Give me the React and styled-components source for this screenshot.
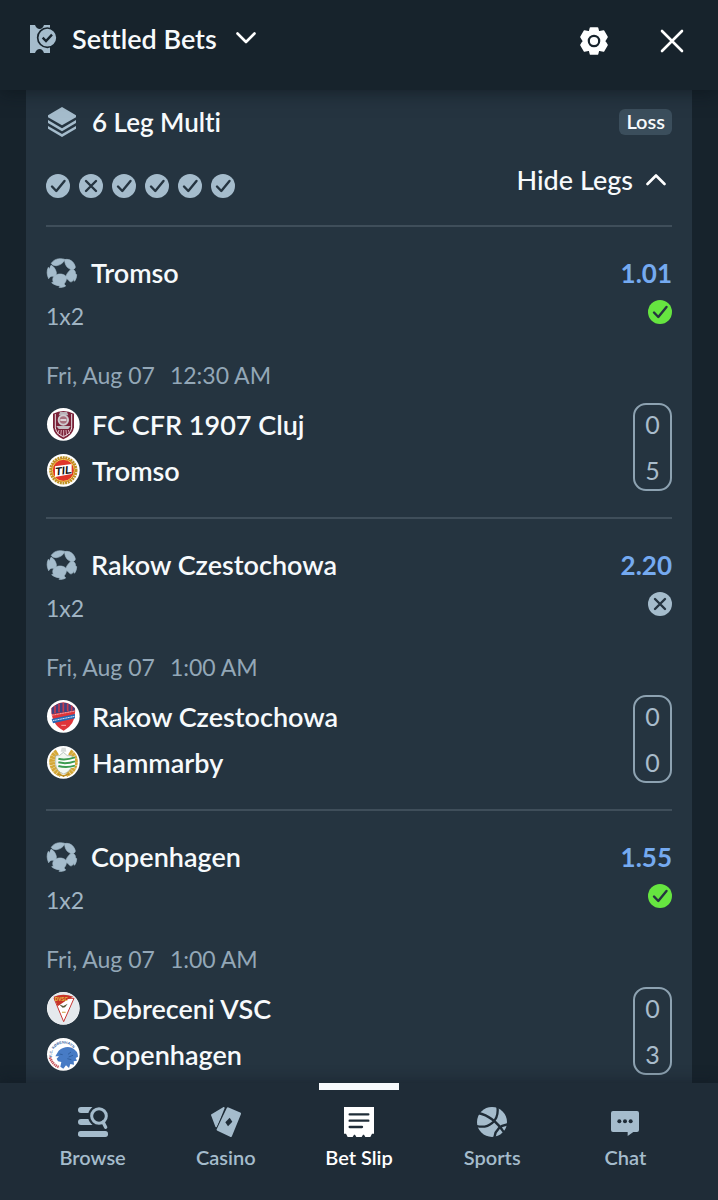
import React, { useState } from 'react';
import styled, { createGlobalStyle } from 'styled-components';

const LEGS = [
  {
    id: 1,
    pick: 'Tromso',
    market: '1x2',
    odds: '1.01',
    won: true,
    date: 'Fri, Aug 07',
    time: '12:30 AM',
    teams: [
      { name: 'FC CFR 1907 Cluj', crest: 'cluj', score: 0 },
      { name: 'Tromso', crest: 'tromso', score: 5 },
    ],
  },
  {
    id: 2,
    pick: 'Rakow Czestochowa',
    market: '1x2',
    odds: '2.20',
    won: false,
    date: 'Fri, Aug 07',
    time: '1:00 AM',
    teams: [
      { name: 'Rakow Czestochowa', crest: 'rakow', score: 0 },
      { name: 'Hammarby', crest: 'hammarby', score: 0 },
    ],
  },
  {
    id: 3,
    pick: 'Copenhagen',
    market: '1x2',
    odds: '1.55',
    won: true,
    date: 'Fri, Aug 07',
    time: '1:00 AM',
    teams: [
      { name: 'Debreceni VSC', crest: 'debrecen', score: 0 },
      { name: 'Copenhagen', crest: 'copenhagen', score: 3 },
    ],
  },
];

const RESULTS = [true, false, true, true, true, true];

const NAV = [
  { label: 'Browse', icon: BrowseIcon },
  { label: 'Casino', icon: CasinoIcon },
  { label: 'Bet Slip', icon: SlipIcon },
  { label: 'Sports', icon: SportsIcon },
  { label: 'Chat', icon: ChatIcon },
];

export default function App() {
  const [open, setOpen] = useState(true);
  const [tab, setTab] = useState('Bet Slip');

  return (
    <Page>
      <GlobalStyle />
      <Header>
        <TitleButton type="button">
          <TicketIcon />
          <Title>Settled Bets</Title>
          <Chevron />
        </TitleButton>
        <HeaderActions>
          <IconButton type="button" aria-label="Settings"><GearIcon /></IconButton>
          <IconButton type="button" aria-label="Close"><CloseIcon /></IconButton>
        </HeaderActions>
      </Header>

      <Body>
        <BetCard>
          <BetHeader>
            <LayersIcon />
            <BetName>6 Leg Multi</BetName>
            <Badge>Loss</Badge>
          </BetHeader>
          <Summary>
            <Results>
              {RESULTS.map((won, i) => (
                <ResultIcon key={i} won={won} />
              ))}
            </Results>
            <ToggleButton type="button" aria-expanded={open} onClick={() => setOpen(!open)}>
              {open ? 'Hide Legs' : 'Show Legs'}
              <Chevron up={open} />
            </ToggleButton>
          </Summary>
          {open && LEGS.map((leg) => <LegItem key={leg.id} leg={leg} />)}
        </BetCard>
      </Body>

      <NavBar>
        {NAV.map(({ label, icon: Icon }) => (
          <NavButton
            key={label}
            type="button"
            $active={tab === label}
            onClick={() => setTab(label)}
          >
            <Icon />
            {label}
          </NavButton>
        ))}
      </NavBar>
    </Page>
  );
}

function LegItem({ leg }) {
  return (
    <Leg>
      <LegTop>
        <div>
          <LegName>
            <BallIcon />
            {leg.pick}
          </LegName>
          <Market>{leg.market}</Market>
        </div>
        <LegOutcome>
          <Odds>{leg.odds}</Odds>
          <ResultIcon won={leg.won} green={leg.won} />
        </LegOutcome>
      </LegTop>
      <Kickoff>
        <span>{leg.date}</span>
        <span>{leg.time}</span>
      </Kickoff>
      <Match>
        <Teams>
          {leg.teams.map((team) => (
            <Team key={team.name}>
              <Crest name={team.crest} />
              {team.name}
            </Team>
          ))}
        </Teams>
        <ScoreBox>
          {leg.teams.map((team) => (
            <span key={team.name}>{team.score}</span>
          ))}
        </ScoreBox>
      </Match>
    </Leg>
  );
}

/* icons */

function ResultIcon({ won, green }) {
  return (
    <svg width="24" height="24" viewBox="0 0 24 24" fill="none">
      <circle cx="12" cy="12" r="12" fill={green ? '#66e540' : '#a5bccc'} />
      <path
        d={won ? 'M6 12.5L10.3 17L18.5 7' : 'M7 7L17 17M17 7L7 17'}
        stroke="#253440"
        strokeWidth="2.4"
        strokeLinecap="round"
        strokeLinejoin="round"
      />
    </svg>
  );
}

function Chevron({ up }) {
  return (
    <svg width="20" height="14" viewBox="0 0 20 14" fill="none">
      <path
        d={up ? 'M1.5 11L10 2.5L18.5 11' : 'M1.5 1.5L10 10L18.5 1.5'}
        stroke="#fff"
        strokeWidth="2.6"
        strokeLinecap="round"
        strokeLinejoin="round"
      />
    </svg>
  );
}

function TicketIcon() {
  return (
    <svg width="27" height="28" viewBox="0 0 81 84" fill="none">
      <path d="M0 0H15C18 8 23 12 29 12S39 8 42 0H60V84H42C39 76 35 72 29 72S18 76 15 84H0Z" fill="#a5bccc" />
      <circle cx="52" cy="38" r="29" fill="#a5bccc" stroke="#17232c" strokeWidth="5" />
      <path d="M38 38L48 48L66 29" stroke="#17232c" strokeWidth="7" />
    </svg>
  );
}

function GearIcon() {
  return (
    <svg width="28" height="28" viewBox="0 0 28 28">
      <path
        d="M10.5 1H17.5L18.5 5L23.5 4L27 10L24.5 14L27 18L23.5 24L18.5 23L17.5 27H10.5L9.5 23L4.5 24L1 18L3.5 14L1 10L4.5 4L9.5 5Z"
        fill="#fff"
        stroke="#fff"
        strokeWidth="1.6"
        strokeLinejoin="round"
      />
      <circle cx="14" cy="14" r="5.2" fill="#fff" stroke="#17232c" strokeWidth="2.2" />
    </svg>
  );
}

function CloseIcon() {
  return (
    <svg width="24" height="24" viewBox="0 0 24 24">
      <path d="M2 2L22 22M22 2L2 22" stroke="#fff" strokeWidth="2.6" strokeLinecap="round" />
    </svg>
  );
}

function LayersIcon() {
  return (
    <svg width="32" height="30" viewBox="-6 0 96 90" fill="#a5bccc">
      <path d="M42 0L84 25V31L42 55L0 31V25Z" />
      <path d="M0 39L42 64L84 39V48L42 73L0 48Z" />
      <path d="M0 57L42 81L84 57V65L42 90L0 65Z" />
    </svg>
  );
}

function BallIcon() {
  return (
    <svg width="32" height="30" viewBox="-3 0 96 90" fill="#a5bccc" stroke="#a5bccc" strokeWidth="2" strokeLinejoin="round">
      <path d="M13 16C20 4 36 -1 53 4C52 13 39 22 28 23C20 23 14 20 13 16Z" />
      <path d="M53 5C68 1 81 11 85 27C83 36 74 37 65 31C56 25 53 15 53 5Z" />
      <path d="M12 22C20 25 25 32 28 43C29 51 24 56 17 55C12 54 8 57 5 62C-1 50 -1 38 4 28L8 34C8 30 10 26 12 22Z" />
      <path d="M71 35C78 34 83 36 85 42C85 46 86 49 89 50C89 58 86 66 82 70L80 64C76 74 69 73 65 67C61 62 58 61 55 62C56 52 63 41 71 35Z" />
      <path d="M22 54C32 46 47 46 56 54C60 62 58 70 51 78L56 84C50 88 42 89 36 88L40 84C30 83 20 80 14 74L19 73C16 66 17 58 22 54Z" />
    </svg>
  );
}

function BrowseIcon() {
  return (
    <svg width="30" height="30" viewBox="0 0 90 90" fill="currentColor">
      <rect x="0" y="0" width="50" height="18" rx="9" />
      <rect x="0" y="36" width="50" height="18" rx="9" />
      <circle cx="63" cy="27" r="33" fill="#1f2c37" />
      <rect x="0" y="72" width="90" height="18" rx="8" />
      <circle cx="63" cy="27" r="22" fill="none" stroke="currentColor" strokeWidth="9" />
      <path d="M75 45L83 61" stroke="currentColor" strokeWidth="10" strokeLinecap="round" />
    </svg>
  );
}

function CasinoIcon() {
  return (
    <svg width="30" height="30" viewBox="0 0 90 90" fill="currentColor" stroke="currentColor" strokeLinejoin="round">
      <path d="M3 24L38 3L16 58Z" strokeWidth="6" />
      <path d="M51 5L86 20L59 86L21 68Z" stroke="#1f2c37" strokeWidth="14" />
      <path d="M51 5L86 20L59 86L21 68Z" strokeWidth="8" />
      <path d="M56 32L64 44L51 58L43 46Z" fill="#1f2c37" stroke="none" />
    </svg>
  );
}

function SlipIcon() {
  return (
    <svg width="30" height="30" viewBox="0 0 90 90" fill="currentColor">
      <path d="M0 0H90V80H84L79 90H64L60 83H57L53 90H37L33 83H30L26 90H11L6 80H0Z" />
      <path d="M17 22H73M17 41H73M17 60H54" stroke="#1f2c37" strokeWidth="7" strokeLinecap="round" />
    </svg>
  );
}

function SportsIcon() {
  return (
    <svg width="30" height="30" viewBox="0 0 90 90">
      <circle cx="45" cy="45" r="45" fill="currentColor" />
      <path
        d="M3 18C38 25 63 48 82 78M-2 57C35 66 68 42 61 -2M52 93C55 68 70 54 94 52"
        fill="none"
        stroke="#1f2c37"
        strokeWidth="7"
      />
    </svg>
  );
}

function ChatIcon() {
  return (
    <svg width="30" height="30" viewBox="0 0 90 90" fill="currentColor">
      <path d="M9 12H81Q87 12 87 18V69Q87 75 81 75H70L53 87V75H9Q3 75 3 69V18Q3 12 9 12Z" />
      <g fill="#1f2c37">
        <circle cx="28" cy="43" r="6" />
        <circle cx="45" cy="43" r="6" />
        <circle cx="62" cy="43" r="6" />
      </g>
    </svg>
  );
}

/* club crests, all drawn on a 99 unit circle */

const CRESTS = {
  cluj: (
    <>
      <path d="M18 17Q49 1 81 17V58Q78 82 49 94Q21 82 18 58Z" fill="#7b2239" />
      <path d="M25 18V60Q29 79 49 86Q70 79 74 60V18" fill="none" stroke="#e6dde1" strokeWidth="3" />
      <path d="M39 12H60L64 22H35Z" fill="#b9b2b8" />
      <circle cx="49" cy="36" r="17" fill="#cfcbd0" />
      <circle cx="49" cy="36" r="11" fill="#a8707e" />
      <path d="M40 36H58" stroke="#e9e5e8" strokeWidth="5" />
      <path d="M28 54H71L64 63H35Z" fill="#c5bec4" />
      <path d="M36 66L32 78M43 66L41 84M50 66V88M57 66L59 84M64 66L68 78" stroke="#d7a9b4" strokeWidth="3" />
    </>
  ),
  tromso: (
    <>
      <circle cx="49" cy="49" r="36" fill="#df3629" />
      <circle cx="49" cy="49" r="38" fill="none" stroke="#bd9121" strokeWidth="9" strokeDasharray="6 2" />
      <circle cx="49" cy="49" r="33" fill="none" stroke="#eed24c" strokeWidth="3" />
      <path d="M24 37L74 30V60L24 69Z" fill="#fff" />
      <text x="49" y="61" textAnchor="middle" fontSize="33" fontWeight="900" fontStyle="italic" fill="#111" transform="rotate(-8 49 49)">TIL</text>
    </>
  ),
  rakow: (
    <>
      <path d="M13 25Q49 -10 84 25Q88 73 50 92Q12 73 13 25Z" fill="#df3439" />
      <path d="M14 24Q49 -8 83 24V32L14 42Z" fill="#41417f" />
      <path d="M24 18V39M36 12V37M49 8V35M62 11V33M74 17V32" stroke="#c8394e" strokeWidth="5" />
      <path d="M14 46L84 33" stroke="#f2aab0" strokeWidth="3" strokeDasharray="4 1" />
      <path d="M14 57L84 42V55L18 70Z" fill="#2769b5" />
      <path d="M18 62L83 49" stroke="#d6e4f4" strokeWidth="3" strokeDasharray="4 1" />
      <path d="M43 76H57" stroke="#f7b0ae" strokeWidth="3" />
    </>
  ),
  hammarby: (
    <>
      <path d="M31 18C6 34 11 73 42 85M68 18C93 34 88 73 57 85" fill="none" stroke="#d4a736" strokeWidth="17" strokeDasharray="8 1" />
      <path d="M33 84L52 91M66 84L47 91" stroke="#bd8d20" strokeWidth="5" />
      <path d="M26 29H37L49 19L61 29H75V55Q72 77 50 84Q28 76 26 55Z" fill="#f4f8f2" stroke="#9aaba3" strokeWidth="2" />
      <path d="M44 5H56L58 17H41Z" fill="#d8dcda" />
      <path d="M34 34Q52 42 84 31V64Q60 72 34 60Z" fill="#fff" />
      <path d="M34 38Q55 44 84 34M34 49Q58 55 84 46M34 60Q58 67 84 59" fill="none" stroke="#3c9b50" strokeWidth="6" />
    </>
  ),
  debrecen: (
    <>
      <circle cx="49" cy="49" r="48" fill="#e5e9ed" />
      <path d="M21 19H81L50 89Z" fill="#fff" stroke="#c73532" strokeWidth="3" />
      <path d="M20 14Q49 2 79 14L63 22L32 43Z" fill="#c73528" />
      <text x="43" y="28" textAnchor="middle" fontSize="14" fontWeight="900" fill="#e3c642">DVSC</text>
      <path d="M36 37L49 42L62 35L54 46L47 47Z" fill="#555b38" />
      <path d="M45 61H56" stroke="#dab66c" strokeWidth="4" />
    </>
  ),
  copenhagen: (
    <>
      <path id="fck-arc" d="M15 56A35 35 0 0 1 82 38" fill="none" />
      <text fontSize="11" fontWeight="900" fill="#38649f">
        <textPath href="#fck-arc">F.C. KØBENHAVN</textPath>
      </text>
      <path d="M9 58Q16 80 37 88" fill="none" stroke="#c6535a" strokeWidth="8" strokeDasharray="4 2" />
      <path d="M35 38Q53 23 74 29Q93 38 93 56L86 60L90 68L80 70L81 80L70 78L66 90L57 82L49 92L40 86L43 72L33 70L29 62L36 55L25 55Z" fill="#477bc5" />
      <path d="M38 48L47 50M72 42L63 49M78 52L65 57M73 65L61 62" stroke="#305f9f" strokeWidth="3" />
    </>
  ),
};

function Crest({ name }) {
  return (
    <svg width="34" height="33" viewBox="-3 0 102 99" fontFamily="Liberation Sans, sans-serif">
      <circle cx="49" cy="49" r="49" fill="#fff" />
      {CRESTS[name]}
    </svg>
  );
}

/* styles */

const GlobalStyle = createGlobalStyle`
  * {
    box-sizing: border-box;
  }
  body {
    margin: 0;
    background: #17232c;
    color: #f7fafc;
    font-family: Lato, "Open Sans", sans-serif;
    font-variant-ligatures: none;
  }
  button {
    padding: 0;
    border: 0;
    background: none;
    color: inherit;
    font: inherit;
    font-variant-ligatures: none;
    cursor: pointer;
  }
  svg {
    display: block;
    flex-shrink: 0;
  }
`;

const Page = styled.div`
  display: flex;
  flex-direction: column;
  height: 100vh;
`;

const Header = styled.header`
  z-index: 1;
  display: flex;
  justify-content: space-between;
  padding: 20px 34px 28px 30px;
  background: #17232c;
  box-shadow: 0 4px 16px rgba(10, 18, 24, 0.5);
`;

const TitleButton = styled.button`
  display: flex;
  align-items: center;
  gap: 15px;
  height: 38px;
`;

const Title = styled.h1`
  margin: 0 4px 0 0;
  font-size: 27px;
  font-weight: 600;
  line-height: 32px;
`;

const HeaderActions = styled.div`
  display: flex;
  align-items: center;
  gap: 52px;
`;

const IconButton = styled.button`
  display: flex;
  align-items: center;
  justify-content: center;
  height: 42px;
`;

const Body = styled.main`
  flex: 1;
  min-height: 0;
  padding: 0 26px;
  overflow-y: auto;
  scrollbar-width: none;
`;

const BetCard = styled.article`
  padding: 16px 20px 0;
  background: #253440;
`;

const BetHeader = styled.div`
  display: flex;
  align-items: center;
  gap: 14px;
  height: 32px;
`;

const BetName = styled.h2`
  flex: 1;
  margin: 0;
  font-size: 26px;
  font-weight: 600;
  line-height: 32px;
`;

const Badge = styled.span`
  padding: 0 7px 2px;
  border-radius: 6px;
  background: #3b4e5c;
  font-size: 20px;
  font-weight: 600;
  line-height: 24px;
`;

const Summary = styled.div`
  display: flex;
  justify-content: space-between;
  align-items: flex-start;
  padding: 26px 6px 27px 0;
`;

const Results = styled.div`
  display: flex;
  gap: 9px;
  padding-top: 10px;
`;

const ToggleButton = styled.button`
  display: flex;
  align-items: center;
  gap: 13px;
  font-size: 27px;
  font-weight: 500;
  line-height: 32px;
`;

const Leg = styled.section`
  padding: 30px 0 26px;
  border-top: 2px solid #3f4e5a;
`;

const LegTop = styled.div`
  display: flex;
  justify-content: space-between;
`;

const LegName = styled.h3`
  display: flex;
  align-items: center;
  gap: 13px;
  margin: 0;
  font-size: 27px;
  font-weight: 600;
  line-height: 32px;
`;

const Market = styled.div`
  margin-top: 12px;
  color: #a0b4c3;
  font-size: 23px;
  line-height: 30px;
`;

const LegOutcome = styled.div`
  display: flex;
  flex-direction: column;
  align-items: flex-end;
  gap: 11px;
`;

const Odds = styled.div`
  color: #75aaf0;
  font-size: 26px;
  font-weight: 700;
  line-height: 32px;
`;

const Kickoff = styled.div`
  display: flex;
  gap: 15px;
  margin-top: 29px;
  color: #93a7b7;
  font-size: 23px;
  line-height: 30px;
`;

const Match = styled.div`
  display: flex;
  justify-content: space-between;
  align-items: center;
  margin-top: 13px;
`;

const Teams = styled.div`
  display: grid;
  gap: 13px;
`;

const Team = styled.div`
  display: flex;
  align-items: center;
  gap: 12px;
  font-size: 27px;
  font-weight: 600;
  line-height: 33px;
`;

const ScoreBox = styled.div`
  display: grid;
  gap: 8px;
  width: 39px;
  border: 2px solid #8da2b1;
  border-radius: 13px;
  color: #a9bccb;
  font-size: 25px;
  line-height: 38px;
  text-align: center;
`;

const NavBar = styled.nav`
  z-index: 1;
  display: flex;
  height: 117px;
  padding: 0 26px;
  background: #1f2c37;
  box-shadow: 0 -3px 12px rgba(16, 25, 33, 0.45);
`;

const NavButton = styled.button`
  position: relative;
  display: flex;
  flex: 1;
  flex-direction: column;
  align-items: center;
  gap: 8px;
  padding-top: 24px;
  color: ${({ $active }) => ($active ? '#fff' : '#a5bccc')};
  font-size: 20px;
  font-weight: 600;
  line-height: 24px;

  &::before {
    content: '';
    position: absolute;
    top: 0;
    width: 80px;
    height: 7px;
    background: ${({ $active }) => ($active ? '#f7fafc' : 'transparent')};
  }
`;
